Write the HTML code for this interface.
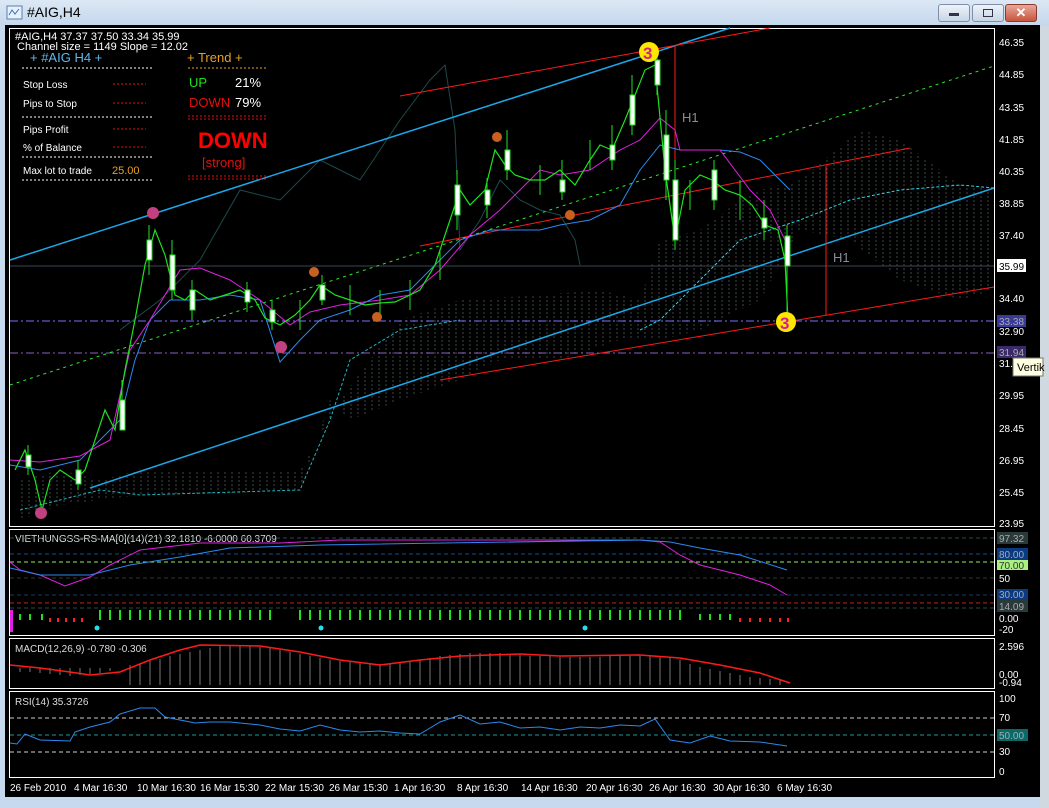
<!DOCTYPE html>
<html><head><meta charset="utf-8"><style>
body{margin:0;width:1049px;height:808px;overflow:hidden;background:#c6d9ee;font-family:"Liberation Sans",sans-serif}
#title{position:absolute;left:0;top:0;width:1049px;height:26px;background:linear-gradient(#dce8f5,#c4d7ec)}
#title span{position:absolute;left:27px;top:4px;font-size:14px;color:#000}
.btn{position:absolute;top:4px;width:30px;height:16px;border:1px solid #7d8ea6;border-radius:3px;background:linear-gradient(#eef3f9,#c7d5e6)}
#chart{position:absolute;left:5px;top:25px;width:1035px;height:772px;background:#000}
svg text{font-family:"Liberation Sans",sans-serif}
</style></head><body>
<div id="title"><svg width="18" height="16" style="position:absolute;left:6px;top:5px"><rect x="1" y="1" width="15" height="13" fill="#e8f0fa" stroke="#5a7fb0"/><path d="M3 10 L6 5 L9 9 L13 4" stroke="#3b6fb5" fill="none"/></svg><span>#AIG,H4</span>
<div class="btn" style="left:938px"><div style="position:absolute;left:10px;top:8px;width:10px;height:3px;background:#334"></div></div>
<div class="btn" style="left:972px"><div style="position:absolute;left:10px;top:4px;width:8px;height:6px;border:1px solid #334"></div></div>
<div class="btn" style="left:1005px;width:30px;background:linear-gradient(#e8a89a,#c8553e);border-color:#8a3a2a;color:#fff;font-weight:bold;text-align:center;font-size:13px;line-height:16px">✕</div>
</div>
<div style="position:absolute;left:1040px;top:26px;width:9px;height:782px;background:#d0d8e0"></div>
<div id="chart"></div>
<svg width="1049" height="808" style="position:absolute;left:0;top:0">
<defs><pattern id="cl" width="7" height="8" patternUnits="userSpaceOnUse"><line x1="1" y1="0" x2="1" y2="2" stroke="#3c4a44" stroke-width="1"/><line x1="1" y1="4" x2="1" y2="6" stroke="#3c4a44" stroke-width="1"/></pattern></defs>
<g fill="none" stroke="#fff" stroke-width="1">
<rect x="9.5" y="28.5" width="985" height="498"/>
<rect x="9.5" y="529.5" width="985" height="106"/>
<rect x="9.5" y="638.5" width="985" height="50"/>
<rect x="9.5" y="691.5" width="985" height="86"/>
</g>
<polygon points="20,480 60,470 100,480 140,470 300,470 340,400 400,320 460,300 540,295 600,290 640,300 660,240 700,230 740,200 760,190 800,180 860,130 900,140 960,185 994,190 994,290 960,300 900,280 850,240 800,230 760,300 700,330 660,340 620,340 560,360 500,360 460,380 400,400 350,420 330,400 300,490 200,495 140,495 100,500 60,505 20,520" fill="url(#cl)"/>
<polyline points="20,510 60,500 100,490 140,495 300,490 330,420 350,360 400,330 460,320" fill="none" stroke="#1fb5c0" stroke-dasharray="3,2"/>
<polyline points="640,330 660,320 700,280 740,240 770,230 800,220 850,200 900,190 960,185 994,188" fill="none" stroke="#2ad4e6" stroke-dasharray="3,2"/>
<line x1="10" y1="266" x2="994" y2="266" stroke="#3a4650"/>
<line x1="10" y1="321" x2="994" y2="321" stroke="#7a6cff" stroke-dasharray="8,3,2,3"/>
<line x1="10" y1="353" x2="994" y2="353" stroke="#8a60c0" stroke-dasharray="8,3,2,3"/>
<polyline points="120,330 160,300 200,260 240,190 280,200 320,160 360,180 400,120 430,80 445,65 455,130 460,250 480,220 500,180 520,200 540,210 560,215 575,240 580,265" fill="none" stroke="#1e4a4a"/>
<line x1="10" y1="260" x2="730" y2="28" stroke="#1aa8ea" stroke-width="1.5"/>
<line x1="90" y1="488" x2="994" y2="188" stroke="#1aa8ea" stroke-width="1.5"/>
<line x1="400" y1="96" x2="770" y2="28" stroke="#ff1a1a"/>
<line x1="420" y1="246" x2="910" y2="148" stroke="#ff1a1a"/>
<line x1="440" y1="380" x2="994" y2="287" stroke="#ff1a1a"/>
<line x1="10" y1="385" x2="994" y2="66" stroke="#2ee62e" stroke-dasharray="3,4"/>
<line x1="675" y1="46" x2="675" y2="240" stroke="#ff1a1a"/>
<line x1="826" y1="166" x2="826" y2="315" stroke="#ff1a1a"/>
<text x="682" y="122" fill="#8a8a9a" font-size="13">H1</text>
<text x="833" y="262" fill="#8a8a9a" font-size="13">H1</text>
<polyline points="10,465 40,470 80,460 120,420 135,360 150,320 170,300 200,300 230,295 260,300 280,362 300,340 320,320 350,310 380,295 410,290 440,260 460,240 490,230 540,230 560,225 590,220 620,205 640,170 660,145 680,150 720,150 740,152 760,160 780,180 790,190" fill="none" stroke="#2a8af0"/>
<polyline points="10,460 40,462 80,456 110,440 130,350 150,320 180,270 200,268 230,280 260,300 290,325 310,312 340,305 380,300 410,295 440,270 470,235 500,210 540,170 560,175 590,170 620,150 640,140 660,118 675,130 680,150 720,150 750,190 770,210 785,240" fill="none" stroke="#e020e0"/>
<polyline points="15,470 25,450 35,480 42,510 50,480 60,470 75,480 85,470 95,440 105,410 115,430 125,370 135,320 145,265 155,230 165,255 175,295 185,300 195,290 210,300 225,295 240,290 255,300 265,318 280,325 295,315 310,300 320,285 335,295 350,300 365,305 380,303 395,302 410,295 420,290 435,265 450,220 460,190 470,205 485,190 495,150 505,165 515,175 530,180 545,180 560,170 575,185 590,160 600,145 612,150 625,120 635,95 645,70 655,65 665,170 675,240 685,190 700,175 712,180 725,190 740,195 752,205 765,225 778,230 785,260 788,320" fill="none" stroke="#1ee21e" stroke-width="1.2"/>
<g stroke="#1ee21e"><path d="M28 445v30M78 460v30M122 380v50M149 225v50M172 240v60M192 280v40M247 282v30M272 300v30M322 275v30M457 170v60M487 178v40M507 130v50M562 160v40M612 125v45M632 75v60M657 50v45M666 110v90M675 160v90M714 160v50M764 200v40M787 225v95M300 300v30M350 285v30M380 290v25M410 280v30M440 250v30M540 165v30M590 140v30M690 180v30M740 180v40"/></g>
<g fill="#fff" stroke="#1ee21e">
<rect x="26" y="455" width="5" height="12"/><rect x="76" y="470" width="5" height="14"/><rect x="120" y="400" width="5" height="30"/><rect x="147" y="240" width="5" height="20"/><rect x="170" y="255" width="5" height="35"/><rect x="190" y="290" width="5" height="20"/><rect x="245" y="290" width="5" height="12"/><rect x="270" y="310" width="5" height="12"/><rect x="320" y="285" width="5" height="15"/><rect x="455" y="185" width="5" height="30"/><rect x="485" y="190" width="5" height="15"/><rect x="505" y="150" width="5" height="20"/><rect x="560" y="180" width="5" height="12"/><rect x="610" y="145" width="5" height="15"/><rect x="630" y="95" width="5" height="30"/><rect x="655" y="60" width="5" height="25"/><rect x="664" y="135" width="5" height="45"/><rect x="673" y="180" width="5" height="60"/><rect x="712" y="170" width="5" height="30"/><rect x="762" y="218" width="5" height="10"/><rect x="785" y="236" width="5" height="30"/>
</g>
<circle cx="649" cy="52" r="10" fill="#ffe600"/><text x="643" y="59" fill="#d02090" font-size="17" font-weight="bold">3</text>
<circle cx="786" cy="322" r="10" fill="#ffe600"/><text x="780" y="329" fill="#d02090" font-size="17" font-weight="bold">3</text>
<circle cx="153" cy="213" r="6" fill="#c04080"/><circle cx="281" cy="347" r="6" fill="#c04080"/><circle cx="41" cy="513" r="6" fill="#c04080"/>
<circle cx="314" cy="272" r="5" fill="#c86020"/><circle cx="377" cy="317" r="5" fill="#c86020"/><circle cx="497" cy="137" r="5" fill="#c86020"/><circle cx="570" cy="215" r="5" fill="#c86020"/>
<g font-size="11" fill="#fff">
<text x="15" y="40">#AIG,H4  37.37 37.50 33.34 35.99</text>
<text x="17" y="50">Channel size = 1149 Slope = 12.02</text>
<text x="30" y="62" fill="#5fb8e8" font-size="13">+  #AIG  H4  +</text>
<text x="23" y="88" font-size="10">Stop Loss</text><text x="23" y="107" font-size="10">Pips to Stop</text>
<text x="23" y="133" font-size="10">Pips Profit</text><text x="23" y="151" font-size="10">% of Balance</text>
<text x="23" y="174" font-size="10">Max lot to trade</text><text x="112" y="174" font-size="11" fill="#e8a020">25.00</text>
<text x="187" y="62" fill="#e8a020" font-size="13">+  Trend  +</text>
<text x="189" y="87" fill="#1ee21e" font-size="13">UP</text><text x="235" y="87" font-size="13">21%</text>
<text x="189" y="107" fill="#e01010" font-size="13">DOWN</text><text x="235" y="107" font-size="13">79%</text>
<text x="198" y="148" fill="#ff0000" font-size="22" font-weight="bold">DOWN</text>
<text x="202" y="167" fill="#e01010" font-size="13">[strong]</text>
</g>
<g stroke-dasharray="2,2" stroke="#fff"><line x1="22" y1="68" x2="152" y2="68"/><line x1="22" y1="117" x2="152" y2="117"/><line x1="22" y1="157" x2="152" y2="157"/><line x1="22" y1="180" x2="152" y2="180"/></g>
<g stroke-dasharray="2,2" stroke="#e01010"><line x1="113" y1="84" x2="146" y2="84"/><line x1="113" y1="103" x2="146" y2="103"/><line x1="113" y1="129" x2="146" y2="129"/><line x1="113" y1="147" x2="146" y2="147"/><line x1="188" y1="116" x2="266" y2="116"/><line x1="188" y1="119" x2="266" y2="119"/><line x1="188" y1="176" x2="266" y2="176"/><line x1="188" y1="179" x2="266" y2="179"/></g>
<line x1="188" y1="68" x2="266" y2="68" stroke="#e8a020" stroke-dasharray="2,2"/>
<g font-size="10" fill="#fff">
<text x="999" y="46">46.35</text><text x="999" y="78">44.85</text><text x="999" y="111">43.35</text><text x="999" y="143">41.85</text><text x="999" y="175">40.35</text><text x="999" y="207">38.85</text><text x="999" y="239">37.40</text><text x="999" y="302">34.40</text><text x="999" y="335">32.90</text><text x="999" y="367">31.4</text><text x="999" y="399">29.95</text><text x="999" y="432">28.45</text><text x="999" y="464">26.95</text><text x="999" y="496">25.45</text><text x="999" y="527">23.95</text>
</g>
<rect x="997" y="259" width="29" height="13" fill="#fff"/><text x="999" y="270" font-size="10" fill="#000">35.99</text>
<rect x="997" y="315" width="29" height="12" fill="#3a3a9a"/><text x="999" y="325" font-size="10" fill="#aaa">33.38</text>
<rect x="997" y="346" width="29" height="12" fill="#3a2a6a"/><text x="999" y="356" font-size="10" fill="#aaa">31.94</text>
<rect x="1013" y="358" width="30" height="18" fill="#ffffe1" stroke="#777"/><text x="1017" y="371" font-size="11" fill="#000">Vertik</text>
<text x="15" y="542" font-size="10" fill="#ddd">VIETHUNGSS-RS-MA[0](14)(21) 32.1810 -6.0000 60.3709</text>
<g stroke-dasharray="4,3"><line x1="10" y1="538" x2="994" y2="538" stroke="#2a4a4a"/><line x1="10" y1="554" x2="994" y2="554" stroke="#1a4a8a"/><line x1="10" y1="562" x2="994" y2="562" stroke="#8cf060"/><line x1="10" y1="578" x2="994" y2="578" stroke="#333"/><line x1="10" y1="595" x2="994" y2="595" stroke="#1a3a6a"/><line x1="10" y1="603" x2="994" y2="603" stroke="#c02020"/><line x1="10" y1="608" x2="994" y2="608" stroke="#2a4a4a"/></g>
<polyline points="10,562 20,570 40,575 65,586 90,577 110,565 140,550 200,543 280,543 340,540 640,540 660,542 680,555 700,565 740,575 770,585 787,595" fill="none" stroke="#e020e0"/>
<polyline points="10,568 40,575 90,575 130,565 180,557 230,548 320,545 640,540 670,542 700,548 740,555 787,570" fill="none" stroke="#2a8af0"/>
<g stroke="#1ee21e" stroke-width="2"><path d="M20 614v6M30 614v6M42 614v6M100 610v10M110 610v10M120 610v10M130 610v10M140 610v10M150 610v10M160 610v10M170 610v10M180 610v10M190 610v10M200 610v10M210 610v10M220 610v10M230 610v10M240 610v10M250 610v10M260 610v10M270 610v10M300 610v10M310 610v10M320 610v10M330 610v10M340 610v10M350 610v10M360 610v10M370 610v10M380 610v10M390 610v10M400 610v10M410 610v10M420 610v10M430 610v10M440 610v10M450 610v10M460 610v10M470 610v10M480 610v10M490 610v10M500 610v10M510 610v10M520 610v10M530 610v10M540 610v10M550 610v10M560 610v10M570 610v10M580 610v10M590 610v10M600 610v10M610 610v10M620 610v10M630 610v10M640 610v10M650 610v10M660 610v10M670 610v10M680 610v10M700 614v6M710 614v6M720 614v6M730 614v6"/></g>
<g stroke="#ff2020" stroke-width="2"><path d="M50 618v4M58 618v4M66 618v4M74 618v4M82 618v4M740 618v4M750 618v4M760 618v4M770 618v4M780 618v4M788 618v4"/></g>
<circle cx="97" cy="628" r="2.5" fill="#1ee0f0"/><circle cx="321" cy="628" r="2.5" fill="#1ee0f0"/><circle cx="585" cy="628" r="2.5" fill="#1ee0f0"/>
<rect x="10" y="610" width="3" height="22" fill="#e020e0"/>
<g font-size="10" fill="#fff"><text x="999" y="582">50</text><text x="999" y="622">0.00</text><text x="999" y="633">-20</text></g>
<rect x="997" y="532" width="31" height="12" fill="#2a3a3a"/><text x="999" y="542" font-size="10" fill="#aaa">97.32</text>
<rect x="997" y="548" width="31" height="12" fill="#0a3a80"/><text x="999" y="558" font-size="10" fill="#aaa">80.00</text>
<rect x="997" y="560" width="31" height="10" fill="#a8f080"/><text x="999" y="569" font-size="10" fill="#333">70.00</text>
<rect x="997" y="589" width="31" height="11" fill="#0a3a80"/><text x="999" y="598" font-size="10" fill="#aaa">30.00</text>
<rect x="997" y="600" width="31" height="12" fill="#2a3a3a"/><text x="999" y="610" font-size="10" fill="#aaa">14.09</text>
<text x="15" y="652" font-size="10" fill="#ddd">MACD(12,26,9) -0.780 -0.306</text>
<g stroke="#777"><path d="M20 668v4M30 668v4M40 668v5M50 668v6M60 668v7M70 668v8M80 668v7M90 668v6M100 668v5M110 668v3M130 665v20M140 663v22M150 661v24M160 659v26M170 656v29M180 654v31M190 652v33M200 650v35M210 648v37M220 646v39M230 646v39M240 646v39M250 646v39M260 647v38M270 648v37M280 650v35M290 652v33M300 654v31M310 656v29M320 658v27M330 660v25M340 661v24M350 662v23M360 663v22M370 664v21M380 664v21M390 664v21M400 663v22M410 662v23M420 660v25M430 658v27M440 656v29M450 655v30M460 654v31M470 653v32M480 653v32M490 653v32M500 653v32M510 654v31M520 655v30M530 656v29M540 656v29M550 656v29M560 657v28M570 657v28M580 657v28M590 657v28M600 657v28M610 656v29M620 656v29M630 656v29M640 656v29M650 656v29M660 656v29M670 657v28M680 660v25M690 664v21M700 667v18M710 669v16M720 671v14M730 673v12M740 675v10M750 677v8M760 678v7M770 679v6M780 680v5"/></g>
<polyline points="10,665 40,668 70,672 90,675 120,672 150,660 180,650 200,645 260,646 300,652 340,660 380,665 420,660 460,656 520,654 560,656 640,655 680,658 720,665 760,673 790,683" fill="none" stroke="#ff1a1a" stroke-width="1.5"/>
<g font-size="10" fill="#fff"><text x="999" y="650">2.596</text><text x="999" y="678">0.00</text><text x="999" y="686">-0.94</text></g>
<text x="15" y="705" font-size="10" fill="#ddd">RSI(14) 35.3726</text>
<g stroke-dasharray="4,3"><line x1="10" y1="718" x2="994" y2="718" stroke="#ccc"/><line x1="10" y1="735" x2="994" y2="735" stroke="#1a9a9a"/><line x1="10" y1="752" x2="994" y2="752" stroke="#ccc"/></g>
<polyline points="10,743 17,744 25,734 40,740 70,741 75,732 90,727 110,722 120,714 140,708 155,708 165,717 180,720 195,723 210,722 230,722 260,725 280,729 300,731 320,725 340,730 360,732 380,731 400,733 420,734 440,722 460,715 480,724 500,722 520,728 540,727 560,730 580,727 600,728 620,725 640,726 655,719 670,740 690,743 710,736 730,741 760,742 787,746" fill="none" stroke="#2a8af0"/>
<g font-size="10" fill="#fff"><text x="999" y="702">100</text><text x="999" y="721">70</text><text x="999" y="755">30</text><text x="999" y="775">0</text></g>
<rect x="997" y="729" width="31" height="12" fill="#0a6a6a"/><text x="999" y="739" font-size="10" fill="#aaa">50.00</text>
<g font-size="10" fill="#fff"><text x="10" y="791">26 Feb 2010</text><text x="74" y="791">4 Mar 16:30</text><text x="137" y="791">10 Mar 16:30</text><text x="200" y="791">16 Mar 15:30</text><text x="265" y="791">22 Mar 15:30</text><text x="329" y="791">26 Mar 15:30</text><text x="394" y="791">1 Apr 16:30</text><text x="457" y="791">8 Apr 16:30</text><text x="521" y="791">14 Apr 16:30</text><text x="586" y="791">20 Apr 16:30</text><text x="649" y="791">26 Apr 16:30</text><text x="713" y="791">30 Apr 16:30</text><text x="777" y="791">6 May 16:30</text></g>
</svg>
</body></html>
